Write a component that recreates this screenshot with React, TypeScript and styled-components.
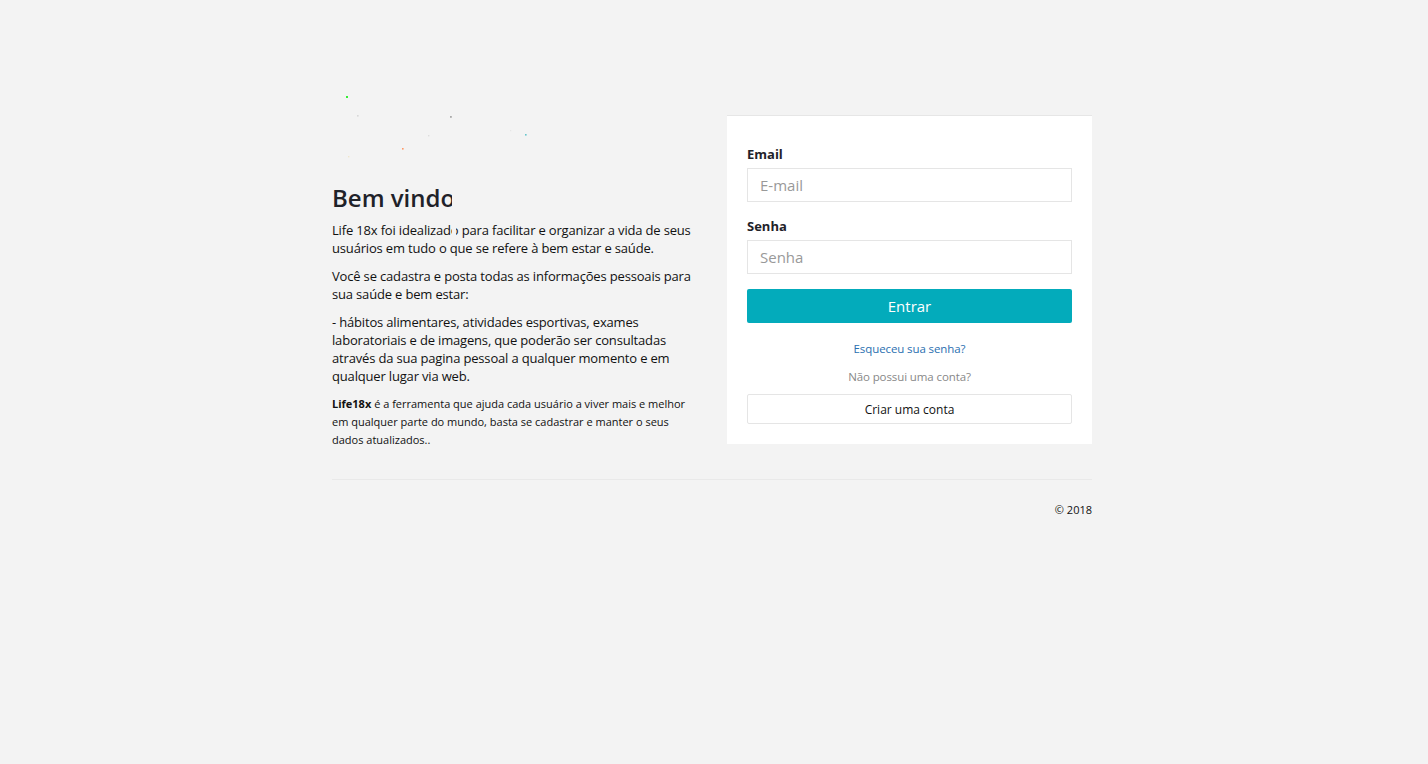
import React from "react";
import styled, { createGlobalStyle } from "styled-components";

const Global = createGlobalStyle`
  html, body { margin: 0; padding: 0; background: #f3f3f3; }
  body { font-family: "Open Sans", "Noto Sans", sans-serif; color: #111; -webkit-font-smoothing: antialiased; }
  * { box-sizing: border-box; }
`;

const Page = styled.div`
  width: 764px;
  margin: 0 auto;
  padding: 80px 4px 0 0;
`;

const Row = styled.div`
  display: flex;
  align-items: flex-start;
  gap: 30px;
`;

const LeftCol = styled.div`
  position: relative;
  width: 365px;
  flex: none;
`;

const RightCol = styled.div`
  width: 365px;
  flex: none;
  margin-top: 35px;
`;

const Particles = styled.svg`
  position: absolute;
  left: 0;
  top: 0;
  pointer-events: none;
`;

const Canvas = styled.div`
  height: 105px;
`;

const Heading = styled.h2`
  margin: 0 0 10px;
  font-size: 24px;
  line-height: 26px;
  font-weight: 600;
  letter-spacing: 0;
  color: #1f2229;
`;

const Para = styled.p<{ $small?: boolean }>`
  margin: 0 0 10px;
  font-size: ${(p) => (p.$small ? "11px" : "13px")};
  letter-spacing: ${(p) => (p.$small ? "0" : "-0.17px")};
  line-height: 18px;
  color: #111;
`;

const Card = styled.div`
  background: #fff;
  border-top: 1px solid #e6e6e6;
  padding: 29px 20px 20px;
`;

const Group = styled.div`
  margin-bottom: 15px;
  display: flex;
  flex-direction: column;
`;

const Label = styled.label`
  font-size: 13px;
  line-height: 18px;
  font-weight: 700;
  color: #1f2229;
  margin-bottom: 5px;
`;

const Input = styled.input`
  height: 34px;
  width: 100%;
  border: 1px solid #e5e5e5;
  padding: 0 12px;
  font-family: "Open Sans", "Noto Sans", sans-serif;
  font-size: 15px;
  color: #333;
  background: #fff;
  outline: none;
  &::placeholder { color: #999; }
`;

const Primary = styled.button`
  display: block;
  width: 100%;
  height: 34px;
  border: none;
  border-radius: 2px;
  background: #03abbb;
  color: #fff;
  font-family: "Open Sans", "Noto Sans", sans-serif;
  font-size: 15px;
  cursor: pointer;
`;

const Center = styled.div<{ $mt: number; $color: string }>`
  margin-top: ${(p) => p.$mt}px;
  text-align: center;
  font-size: 11.5px;
  letter-spacing: -0.1px;
  line-height: 17px;
  color: ${(p) => p.$color};
`;

const Link = styled.a`
  color: #2a6fb0;
  text-decoration: none;
`;

const Secondary = styled.button`
  display: block;
  width: 100%;
  height: 30px;
  margin-top: 9px;
  border: 1px solid #e5e5e5;
  border-radius: 2px;
  background: #fff;
  color: #111;
  font-family: "Open Sans", "Noto Sans", sans-serif;
  font-size: 12px;
  cursor: pointer;
`;

const Rule = styled.hr`
  margin: 20px 0 0;
  border: none;
  border-top: 1px solid #e9e9e9;
`;

const Footer = styled.footer`
  text-align: right;
  font-size: 11px;
  line-height: 16px;
  padding-top: 22px;
  color: #111;
`;

const dots = [
  { x: 14, y: 16, c: "#33ee33", r: 1 },
  { x: 25, y: 35, c: "#d8d8d8", r: 0.8 },
  { x: 118, y: 36, c: "#aaaaaa", r: 0.9 },
  { x: 96, y: 55, c: "#dddddd", r: 0.7 },
  { x: 193, y: 54, c: "#66c6cc", r: 0.8 },
  { x: 70, y: 68, c: "#ff9966", r: 0.8 },
  { x: 16, y: 76, c: "#efe6cc", r: 0.7 },
  { x: 178, y: 50, c: "#e6e6e6", r: 0.6 },
];

export default function App() {
  return (
    <>
      <Global />
      <Page>
        <Row>
          <LeftCol>
            <Canvas />
            <Heading>Bem vindo</Heading>
            <Para>
              Life 18x foi idealizado para facilitar e organizar a vida de seus usuários em tudo o que se
              refere à bem estar e saúde.
            </Para>
            <Para>Você se cadastra e posta todas as informações pessoais para sua saúde e bem estar:</Para>
            <Para>
              - hábitos alimentares, atividades esportivas, exames laboratoriais e de imagens, que poderão
              ser consultadas através da sua pagina pessoal a qualquer momento e em qualquer lugar via web.
            </Para>
            <Para $small>
              <b>Life18x</b> é a ferramenta que ajuda cada usuário a viver mais e melhor em qualquer parte do
              mundo, basta se cadastrar e manter o seus dados atualizados..
            </Para>
            <Particles width="365" height="170" viewBox="0 0 365 170">
              {dots.map((d, i) => (
                <rect key={i} x={d.x} y={d.y} width={d.r * 2} height={d.r * 2} fill={d.c} />
              ))}
              <rect x="120" y="106" width="4" height="56" fill="#f3f3f3" />
            </Particles>
          </LeftCol>
          <RightCol>
            <Card>
              <Group>
                <Label>Email</Label>
                <Input type="email" placeholder="E-mail" />
              </Group>
              <Group>
                <Label>Senha</Label>
                <Input type="password" placeholder="Senha" />
              </Group>
              <Primary>Entrar</Primary>
              <Center $mt={17} $color="#2a6fb0">
                <Link href="#">Esqueceu sua senha?</Link>
              </Center>
              <Center $mt={11} $color="#888">Não possui uma conta?</Center>
              <Secondary>Criar uma conta</Secondary>
            </Card>
          </RightCol>
        </Row>
        <Rule />
        <Footer>© 2018</Footer>
      </Page>
    </>
  );
}
